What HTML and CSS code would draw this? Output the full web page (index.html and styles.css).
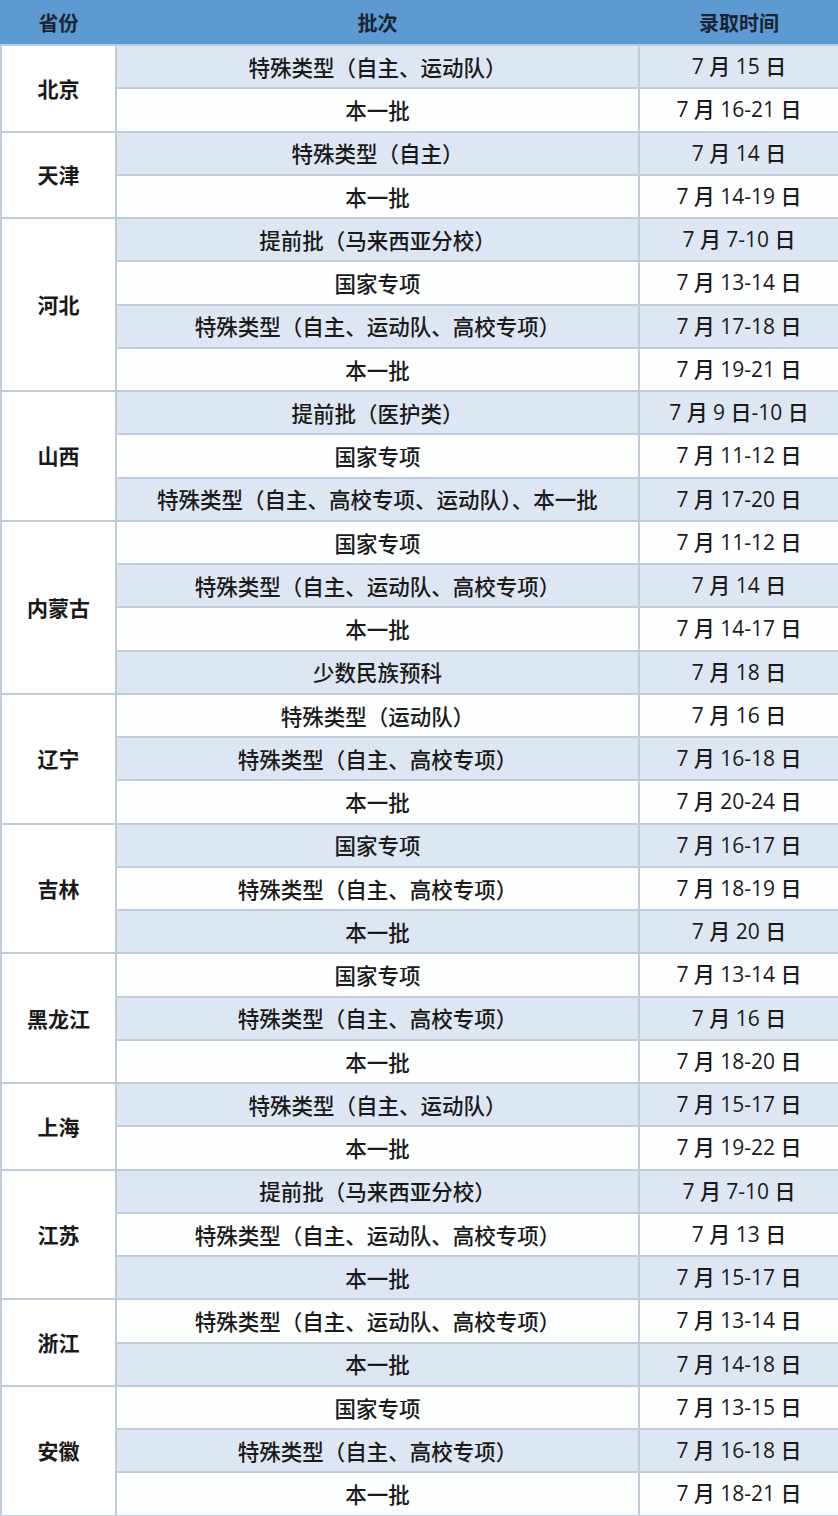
FILE: index.html
```html
<!DOCTYPE html>
<html lang="zh">
<head>
<meta charset="utf-8">
<title>录取时间</title>
<link rel="stylesheet" href="styles.css">
</head>
<body>
<table class="sched">
  <colgroup><col class="c-prov"><col class="c-batch"><col class="c-date"></colgroup>
  <thead>
    <tr><th>省份</th><th>批次</th><th>录取时间</th></tr>
  </thead>
  <tbody>
    <tr class="b"><td class="prov" rowspan="2">北京</td><td>特殊类型（自主、运动队）</td><td class="date">7 月 15 日</td></tr>
    <tr class="w"><td>本一批</td><td class="date">7 月 16-21 日</td></tr>
    <tr class="b"><td class="prov" rowspan="2">天津</td><td>特殊类型（自主）</td><td class="date">7 月 14 日</td></tr>
    <tr class="w"><td>本一批</td><td class="date">7 月 14-19 日</td></tr>
    <tr class="b"><td class="prov" rowspan="4">河北</td><td>提前批（马来西亚分校）</td><td class="date">7 月 7-10 日</td></tr>
    <tr class="w"><td>国家专项</td><td class="date">7 月 13-14 日</td></tr>
    <tr class="b"><td>特殊类型（自主、运动队、高校专项）</td><td class="date">7 月 17-18 日</td></tr>
    <tr class="w"><td>本一批</td><td class="date">7 月 19-21 日</td></tr>
    <tr class="b"><td class="prov" rowspan="3">山西</td><td>提前批（医护类）</td><td class="date">7 月 9 日-10 日</td></tr>
    <tr class="w"><td>国家专项</td><td class="date">7 月 11-12 日</td></tr>
    <tr class="b"><td>特殊类型（自主、高校专项、运动队）、本一批</td><td class="date">7 月 17-20 日</td></tr>
    <tr class="w"><td class="prov" rowspan="4">内蒙古</td><td>国家专项</td><td class="date">7 月 11-12 日</td></tr>
    <tr class="b"><td>特殊类型（自主、运动队、高校专项）</td><td class="date">7 月 14 日</td></tr>
    <tr class="w"><td>本一批</td><td class="date">7 月 14-17 日</td></tr>
    <tr class="b"><td>少数民族预科</td><td class="date">7 月 18 日</td></tr>
    <tr class="w"><td class="prov" rowspan="3">辽宁</td><td>特殊类型（运动队）</td><td class="date">7 月 16 日</td></tr>
    <tr class="b"><td>特殊类型（自主、高校专项）</td><td class="date">7 月 16-18 日</td></tr>
    <tr class="w"><td>本一批</td><td class="date">7 月 20-24 日</td></tr>
    <tr class="b"><td class="prov" rowspan="3">吉林</td><td>国家专项</td><td class="date">7 月 16-17 日</td></tr>
    <tr class="w"><td>特殊类型（自主、高校专项）</td><td class="date">7 月 18-19 日</td></tr>
    <tr class="b"><td>本一批</td><td class="date">7 月 20 日</td></tr>
    <tr class="w"><td class="prov" rowspan="3">黑龙江</td><td>国家专项</td><td class="date">7 月 13-14 日</td></tr>
    <tr class="b"><td>特殊类型（自主、高校专项）</td><td class="date">7 月 16 日</td></tr>
    <tr class="w"><td>本一批</td><td class="date">7 月 18-20 日</td></tr>
    <tr class="b"><td class="prov" rowspan="2">上海</td><td>特殊类型（自主、运动队）</td><td class="date">7 月 15-17 日</td></tr>
    <tr class="w"><td>本一批</td><td class="date">7 月 19-22 日</td></tr>
    <tr class="b"><td class="prov" rowspan="3">江苏</td><td>提前批（马来西亚分校）</td><td class="date">7 月 7-10 日</td></tr>
    <tr class="w"><td>特殊类型（自主、运动队、高校专项）</td><td class="date">7 月 13 日</td></tr>
    <tr class="b"><td>本一批</td><td class="date">7 月 15-17 日</td></tr>
    <tr class="w"><td class="prov" rowspan="2">浙江</td><td>特殊类型（自主、运动队、高校专项）</td><td class="date">7 月 13-14 日</td></tr>
    <tr class="b"><td>本一批</td><td class="date">7 月 14-18 日</td></tr>
    <tr class="w"><td class="prov" rowspan="3">安徽</td><td>国家专项</td><td class="date">7 月 13-15 日</td></tr>
    <tr class="b"><td>特殊类型（自主、高校专项）</td><td class="date">7 月 16-18 日</td></tr>
    <tr class="w"><td>本一批</td><td class="date">7 月 18-21 日</td></tr>
  </tbody>
</table>
</body>
</html>
```

FILE: styles.css
```css
html, body {
  margin: 0;
  padding: 0;
  background: #ffffff;
}

.sched {
  width: 838px;
  border-collapse: collapse;
  table-layout: fixed;
  font-family: "Noto Sans CJK SC", "Noto Sans", sans-serif;
  font-size: 21.5px;
  color: #1a1a1a;
}

.c-prov { width: 115px; }
.c-batch { width: 523px; }
.c-date { width: 200px; }

.sched th {
  background: #5e9ad2;
  color: #1a2433;
  font-weight: 700;
  font-size: 20px;
  height: 44px;
  padding: 0;
  text-align: center;
  border: 2px solid #bccbda;
  border-top: none;
  border-left-color: #5e9ad2;
  border-right-color: #5e9ad2;
}

.sched td {
  height: 41.26px;
  padding: 0;
  text-align: center;
  border: 2px solid #bfccd9;
  line-height: 1;
  font-weight: 500;
}

.sched td.date {
  font-family: "Open Sans", "Noto Sans CJK SC", sans-serif;
  font-size: 21px;
}

.sched tr.b td { background: #dde7f3; }
.sched tr.w td { background: #fdfefe; }

.sched td.prov {
  background: #ffffff !important;
  font-weight: 700;
  font-size: 21px;
}
```
